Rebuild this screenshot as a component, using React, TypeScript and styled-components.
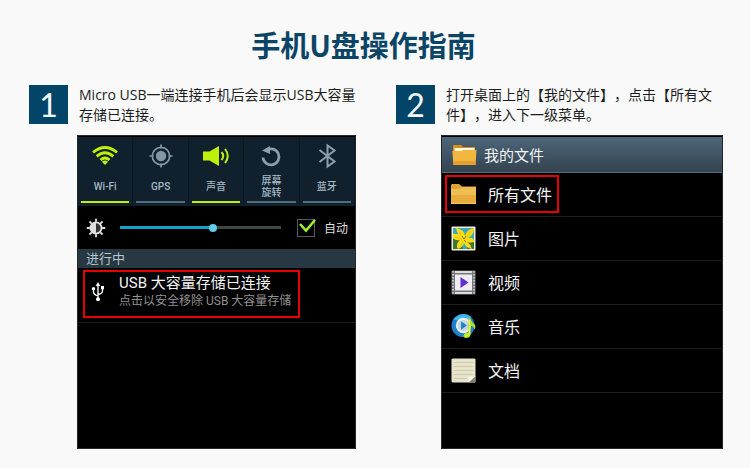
import React, { useState } from "react";
import styled, { createGlobalStyle } from "styled-components";

const cjk = `"Noto Sans CJK SC", sans-serif`;

const GlobalStyle = createGlobalStyle`
  * { box-sizing: border-box; }
  body { margin: 0; background: #f9f9f9; color: #1c1c1c; font-family: "Open Sans", ${cjk}; }
  button, input { font: inherit; }
`;

const Page = styled.main`
  padding: 24px 27px 19px 29px;
`;

const Title = styled.h1`
  margin: 0 0 21px;
  padding-right: 25px;
  text-align: center;
  color: #0b4565;
  font: 700 29px/40px ${cjk};
`;

const Steps = styled.div`
  display: grid;
  grid-template-columns: 1fr 1fr;
  gap: 40px;
`;

const Step = styled.section`
  display: flex;
  flex-direction: column;
`;

const StepHead = styled.header`
  display: flex;
  align-items: flex-start;
  gap: 11px;
  min-height: 50px;
`;

const Badge = styled.span`
  flex: none;
  width: 39px;
  height: 39px;
  background: #034568;
  color: #f4f8fa;
  text-align: center;
  font: 32px/39px Lato, sans-serif;
`;

const Instruction = styled.p`
  flex: 1;
  margin: 0;
  font-size: 14px;
  line-height: 20px;
  text-spacing-trim: space-all;
`;

const Phone = styled.div<{ $indent: number }>`
  margin-left: ${(p) => p.$indent}px;
  min-height: 314px;
  padding-top: 1px;
  border: 1px solid #24272a;
  background: #000;
  color: #f4f4f4;
  font-family: Roboto, ${cjk};
`;

const Tiles = styled.div`
  display: grid;
  grid-template-columns: repeat(5, 1fr);
  background: #10212d;
`;

const Tile = styled.button<{ $on?: boolean }>`
  display: flex;
  flex-direction: column;
  align-items: center;
  height: 69px;
  padding: 5px 3px 3px;
  border: 0;
  border-right: 1px solid #0a1822;
  background: none;
  color: #a5b8c5;
  font-size: 10px;
  line-height: 12px;

  &::after {
    content: "";
    width: 100%;
    height: 2px;
    background: ${(p) => (p.$on ? "#bff00a" : "#546d7c")};
  }
`;

const TileLabel = styled.span`
  flex: 1;
  display: flex;
  align-items: center;
  font-weight: 500;
  padding-top: 2px;
`;

const Brightness = styled.div`
  display: flex;
  align-items: center;
  height: 43px;
  padding: 0 7px 0 8px;
`;

const Slider = styled.input<{ $value: number }>`
  appearance: none;
  flex: 1;
  min-width: 0;
  height: 8px;
  margin: 0 16px 0 14px;
  background: linear-gradient(90deg, #12a4c6 ${(p) => p.$value}%, #3c4848 ${(p) => p.$value}%) center / 100% 3px no-repeat;

  &::-webkit-slider-thumb {
    appearance: none;
    width: 8px;
    height: 8px;
    border-radius: 50%;
    background: #5fcdea;
  }
`;

const AutoLabel = styled.label`
  display: flex;
  align-items: center;
  gap: 9px;
  color: #dedede;
  font-size: 12px;
`;

const CheckWrap = styled.span`
  display: grid;
  width: 18px;
  height: 18px;

  & > * { grid-area: 1 / 1; }
  svg { pointer-events: none; overflow: visible; }
  input:not(:checked) + svg { visibility: hidden; }
`;

const Check = styled.input`
  appearance: none;
  width: 18px;
  height: 18px;
  margin: 0;
  border: 1px solid #5b5b5b;
`;

const SectionLabel = styled.h2`
  margin: 0;
  padding: 0 8px;
  background: #273842;
  color: #b4c5cf;
  font-size: 13px;
  font-weight: 400;
  line-height: 19px;
`;

const Notifications = styled.div`
  padding: 2px 5px 4px;
  border-bottom: 1px solid #1b1b1b;
`;

const Notification = styled.button`
  display: flex;
  align-items: center;
  width: 217px;
  max-width: 100%;
  height: 48px;
  gap: 14px;
  padding: 0 0 4px 6px;
  border: 2px solid #e60000;
  background: none;
  color: inherit;
  text-align: left;
`;

const NoticeText = styled.span`
  display: flex;
  flex-direction: column;
  white-space: nowrap;
`;

const NoticeTitle = styled.span`
  font-size: 15px;
  line-height: 19px;
`;

const NoticeHint = styled.span`
  color: #929292;
  font-size: 12px;
  line-height: 17px;
`;

const AppBar = styled.div`
  display: flex;
  align-items: center;
  gap: 7px;
  height: 36px;
  padding: 0 10px;
  border-bottom: 1px solid #526f80;
  background: linear-gradient(#4d667b, #34434f);
`;

const AppTitle = styled.h2`
  margin: 0;
  font-size: 15px;
  font-weight: 400;
`;

const FileList = styled.ul`
  margin: 0;
  padding: 0;
  list-style: none;
`;

const FileItem = styled.li`
  height: 44px;
  padding: 2px 3px;
  border-bottom: 1px solid #1d1d1d;
`;

const FileButton = styled.button<{ $marked?: boolean }>`
  display: flex;
  align-items: center;
  gap: 12px;
  width: 114px;
  height: 38px;
  padding: 0 4px;
  border: 2px solid ${(p) => (p.$marked ? "#e60000" : "transparent")};
  background: none;
  color: inherit;
  font-size: 16px;
  white-space: nowrap;
`;

const Icon = styled.svg`
  display: block;
  flex: none;
`;

const WifiIcon = () => (
  <Icon width="28" height="28" viewBox="0 0 28 28" fill="none" stroke="#bff00a" strokeWidth="2.9">
    <path d="M2 10.5Q14 .5 26 10.5M5.7 14.4Q14 7 22.3 14.4M9.5 18Q14 13.9 18.5 18" />
    <path d="M14 23 10.9 19.8Q14 17.2 17.1 19.8Z" fill="#bff00a" stroke="none" />
  </Icon>
);

const GpsIcon = () => (
  <Icon width="28" height="28" viewBox="0 0 28 28" fill="none" stroke="#8297a4" strokeWidth="1.7">
    <circle cx="14" cy="14" r="8.7" />
    <circle cx="14" cy="14" r="5.2" fill="#8297a4" stroke="none" />
    <path d="M14 2.5v4M14 21.5v4M2.5 14h4M21.5 14h4" />
  </Icon>
);

const SoundIcon = () => (
  <Icon width="28" height="28" viewBox="0 0 28 28" fill="none" stroke="#bff00a" strokeWidth="2">
    <path d="M1 9.5h6.5L17 4v20l-9.5-5.5H1Z" fill="#bff00a" stroke="none" />
    <path d="M19.5 10q3.5 4 0 8M23 7q5.5 7 0 14" />
  </Icon>
);

const RotateIcon = () => (
  <Icon width="28" height="28" viewBox="0 0 28 28" fill="none" stroke="#8c9faa" strokeWidth="2.7">
    <path d="M9.5 8.2A8 8 0 1 1 6 15.5" />
    <path d="M5 8.500 13 4v8Z" fill="#8c9faa" stroke="none" />
  </Icon>
);

const BluetoothIcon = () => (
  <Icon width="28" height="28" viewBox="0 0 28 28" fill="none" stroke="#8c9faa" strokeWidth="2">
    <path d="M6.500 8 21.500 19.500 14.500 24.500V3.500L21.500 8.500 6.500 20" />
  </Icon>
);

const SunIcon = () => (
  <Icon width="20" height="20" viewBox="0 0 20 20" fill="none" stroke="#e6e6e6" strokeWidth="1.8">
    <path d="M10 .8v3M10 16.2v3M.8 10h3M16.2 10h3M3.500 3.500l2.200 2.200M14.300 14.300l2.200 2.200M3.500 16.500l2.200-2.200M14.300 5.700l2.200-2.200" />
    <circle cx="10" cy="10" r="5.600" fill="#333" />
    <path d="M10 4.400a5.600 5.600 0 0 0 0 11.200Z" fill="#ddd" stroke="none" />
  </Icon>
);

const UsbIcon = () => (
  <Icon width="14" height="20" viewBox="0 0 14 20" fill="none" stroke="#fff" strokeWidth="1.3">
    <path d="M7 3v14M2.500 7v3q0 2.500 4.500 4M11.500 6v3q0 2.500-4.500 3.500" />
    <path d="M7 0 9.300 4H4.700ZM10 4h3v3.200h-3Z" fill="#fff" stroke="none" />
    <circle cx="2.500" cy="6.800" r="1.700" fill="#fff" stroke="none" />
    <circle cx="7" cy="17.200" r="2" fill="#fff" stroke="none" />
  </Icon>
);

const OpenFolderIcon = () => (
  <Icon width="25" height="22" viewBox="0 0 25 22">
    <path d="M1 2Q1 1 2 1h7l2 2h11q1 0 1 1v15H1Z" fill="#d98e16" />
    <path d="M2.500 4h20v6h-20Z" fill="#fff7df" />
    <path d="M.3 7h9l2-1H24.500L23.500 21H1.500Z" fill="#f2b73f" />
    <path d="M1.200 17h22.500l-.2 4h-22Z" fill="#e5a02c" />
  </Icon>
);

const FolderIcon = () => (
  <Icon width="25" height="22" viewBox="0 0 25 22">
    <path d="M0 2 1 1h7l3 2.500h14V21H0Z" fill="#dea336" />
    <path d="M0 6h8l3-2h14v17H0Z" fill="#efbe55" />
    <path d="M0 12h25v9H0Z" fill="#e8ad3c" />
    <path d="M0 20.500h25" stroke="#f8c65a" />
  </Icon>
);

const PhotoIcon = () => (
  <Icon width="25" height="25" viewBox="0 0 25 25">
    <rect x=".5" y=".5" width="24" height="24" rx="1" fill="#f2eee0" />
    <path d="M2 2h21v21H2Z" fill="#3da9b5" />
    <path d="M2 13 10 14 12 23H2ZM17 12l6 3v8h-7Z" fill="#437530" />
    <path d="M12.500 13Q6 9 5 2q8 1 9 8Q16 3 23 2q0 7-6 10 6-1 6 4-5 1-7 0 4 3 5 7-6-1-8-6-1 4-6 6-3-5 2-9-4 1-7-2V8q7-1 10.500 5Z" fill="#f9dd13" />
    <path d="M13 14 8 6M14 13l6-8M14 14l6 6M12 15l-3 6M11 13 4 11" stroke="#f0b810" strokeWidth=".8" />
    <path d="m13 13-2-3M13 13l2-3M13 14l2 2" stroke="#85611a" strokeWidth=".8" />
  </Icon>
);

const VideoIcon = () => (
  <Icon width="25" height="25" viewBox="0 0 25 25">
    <rect x=".5" y=".5" width="24" height="24" rx="1" fill="#77777b" />
    <path d="M2 1v23M23 1v23" stroke="#c9c9cc" strokeWidth="1.7" strokeDasharray="1.5 1.5" />
    <path d="M4 1h17v2H4ZM4 22h17v2H4Z" fill="#ddd" />
    <path d="M4 4.500h17v16H4Z" fill="#eeedf3" />
    <path d="m9.500 7 8 5.500-8 5.500Z" fill="#632fd0" />
  </Icon>
);

const MusicIcon = () => (
  <Icon width="25" height="26" viewBox="0 0 26 27">
    <circle cx="12.500" cy="13" r="12" fill="#1d82cb" />
    <path d="M3 7a12 12 0 0 1 18-3L17 9Z" fill="#42b6e9" />
    <circle cx="13" cy="13" r="8" fill="#e8eef2" />
    <circle cx="13" cy="13" r="5.800" fill="#c8d4dc" />
    <path d="m10.500 8.500 6 4.500-6 4.500Z" fill="#1c83c8" />
    <path d="M18 5.500h2q1 4 5 7 1 2-.5 5-1-4-4-4.500V22q-1 4-4.500 4-3.500-.5-3-3 1-3 5-2.500Z" fill="#b6e51a" />
    <path d="M19.300 7v14q-1 3-4.500 3" fill="none" stroke="#e6f971" />
  </Icon>
);

const DocumentIcon = () => (
  <Icon width="25" height="25" viewBox="0 0 25 25">
    <path d="M1.500.5h22l1 1V23q0 1.500-1.500 1.500H2Q.5 24.500.5 23V1.500Z" fill="#e8e3cb" />
    <path d="M3 4.500h19M3 8.500h19M3 12.500h19M3 16.500h19M3 20.500h13" stroke="#d0c9ac" />
    <path d="M17.500 24.500v-6h7Z" fill="#fffdf1" />
    <path d="m17.500 24.500 7-6v6Z" fill="#827e6c" />
  </Icon>
);

const tiles = [
  { label: "Wi-Fi", icon: <WifiIcon />, on: true },
  { label: "GPS", icon: <GpsIcon /> },
  { label: "声音", icon: <SoundIcon />, on: true },
  { label: <>屏幕<br />旋转</>, icon: <RotateIcon /> },
  { label: "蓝牙", icon: <BluetoothIcon /> },
];

const files = [
  { label: "所有文件", icon: <FolderIcon />, marked: true },
  { label: "图片", icon: <PhotoIcon /> },
  { label: "视频", icon: <VideoIcon /> },
  { label: "音乐", icon: <MusicIcon /> },
  { label: "文档", icon: <DocumentIcon /> },
];

function QuickPanel() {
  const [level, setLevel] = useState(58);
  return (
    <Phone $indent={48}>
      <Tiles>
        {tiles.map((tile, i) => (
          <Tile key={i} type="button" $on={tile.on}>
            {tile.icon}
            <TileLabel>{tile.label}</TileLabel>
          </Tile>
        ))}
      </Tiles>
      <Brightness>
        <SunIcon />
        <Slider
          type="range"
          aria-label="亮度"
          value={level}
          $value={level}
          onChange={(e) => setLevel(Number(e.target.value))}
        />
        <AutoLabel>
          <CheckWrap>
            <Check type="checkbox" defaultChecked />
            <Icon width="18" height="18" viewBox="0 0 18 18" fill="none" stroke="#a6f224" strokeWidth="2.5">
              <path d="m3 5 6 6.500L18 1" />
            </Icon>
          </CheckWrap>
          自动
        </AutoLabel>
      </Brightness>
      <SectionLabel>进行中</SectionLabel>
      <Notifications>
        <Notification type="button">
          <UsbIcon />
          <NoticeText>
            <NoticeTitle>USB 大容量存储已连接</NoticeTitle>
            <NoticeHint>点击以安全移除 USB 大容量存储</NoticeHint>
          </NoticeText>
        </Notification>
      </Notifications>
    </Phone>
  );
}

function FileBrowser() {
  return (
    <Phone $indent={45}>
      <AppBar>
        <OpenFolderIcon />
        <AppTitle>我的文件</AppTitle>
      </AppBar>
      <FileList>
        {files.map((file) => (
          <FileItem key={file.label}>
            <FileButton type="button" $marked={file.marked}>
              {file.icon}
              {file.label}
            </FileButton>
          </FileItem>
        ))}
      </FileList>
    </Phone>
  );
}

export default function App() {
  return (
    <>
      <GlobalStyle />
      <Page>
        <Title>手机U盘操作指南</Title>
        <Steps>
          <Step>
            <StepHead>
              <Badge>1</Badge>
              <Instruction>Micro USB一端连接手机后会显示USB大容量存储已连接。</Instruction>
            </StepHead>
            <QuickPanel />
          </Step>
          <Step>
            <StepHead>
              <Badge>2</Badge>
              <Instruction>打开桌面上的【我的文件】，点击【所有文件】，进入下一级菜单。</Instruction>
            </StepHead>
            <FileBrowser />
          </Step>
        </Steps>
      </Page>
    </>
  );
}
